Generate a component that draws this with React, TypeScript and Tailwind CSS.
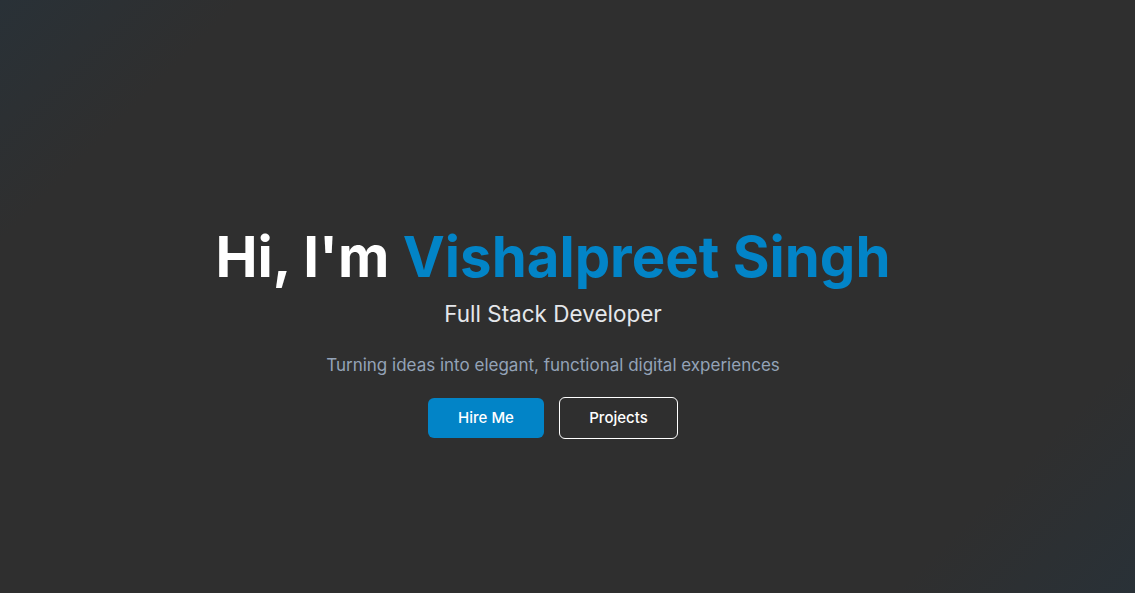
export default function App() {
  return (
    <div
      className="min-h-[593px] w-full bg-[linear-gradient(135deg,#293137_0%,#2f2f2f_14%,#2f2f2f_86%,#293137_100%)] text-white"
      style={{ fontFamily: "Inter, 'Noto Sans', sans-serif" }}
    >
      <div className="flex flex-col items-center pt-[229px] pr-[29px] text-center">
        <h1 className="text-[56.3px] font-bold leading-none text-white">
          Hi, I'm <span className="text-[#0284c7]">Vishalpreet Singh</span>
        </h1>
        <p className="mt-[12px] text-[22.5px] leading-[33px] text-[#e5e7eb]">Full Stack Developer</p>
        <p className="mt-[21px] text-[17px] leading-[28px] text-[#94a3b8]">
          Turning ideas into elegant, functional digital experiences
        </p>
        <div className="mt-[18px] flex items-center gap-[15px]">
          <button className="h-[40px] w-[116px] rounded-[6px] bg-[#0284c7] text-[15px] font-medium text-white">
            Hire Me
          </button>
          <button className="h-[42px] w-[119px] rounded-[6px] border border-white bg-transparent text-[15px] font-medium text-white">
            Projects
          </button>
        </div>
      </div>
    </div>
  );
}
